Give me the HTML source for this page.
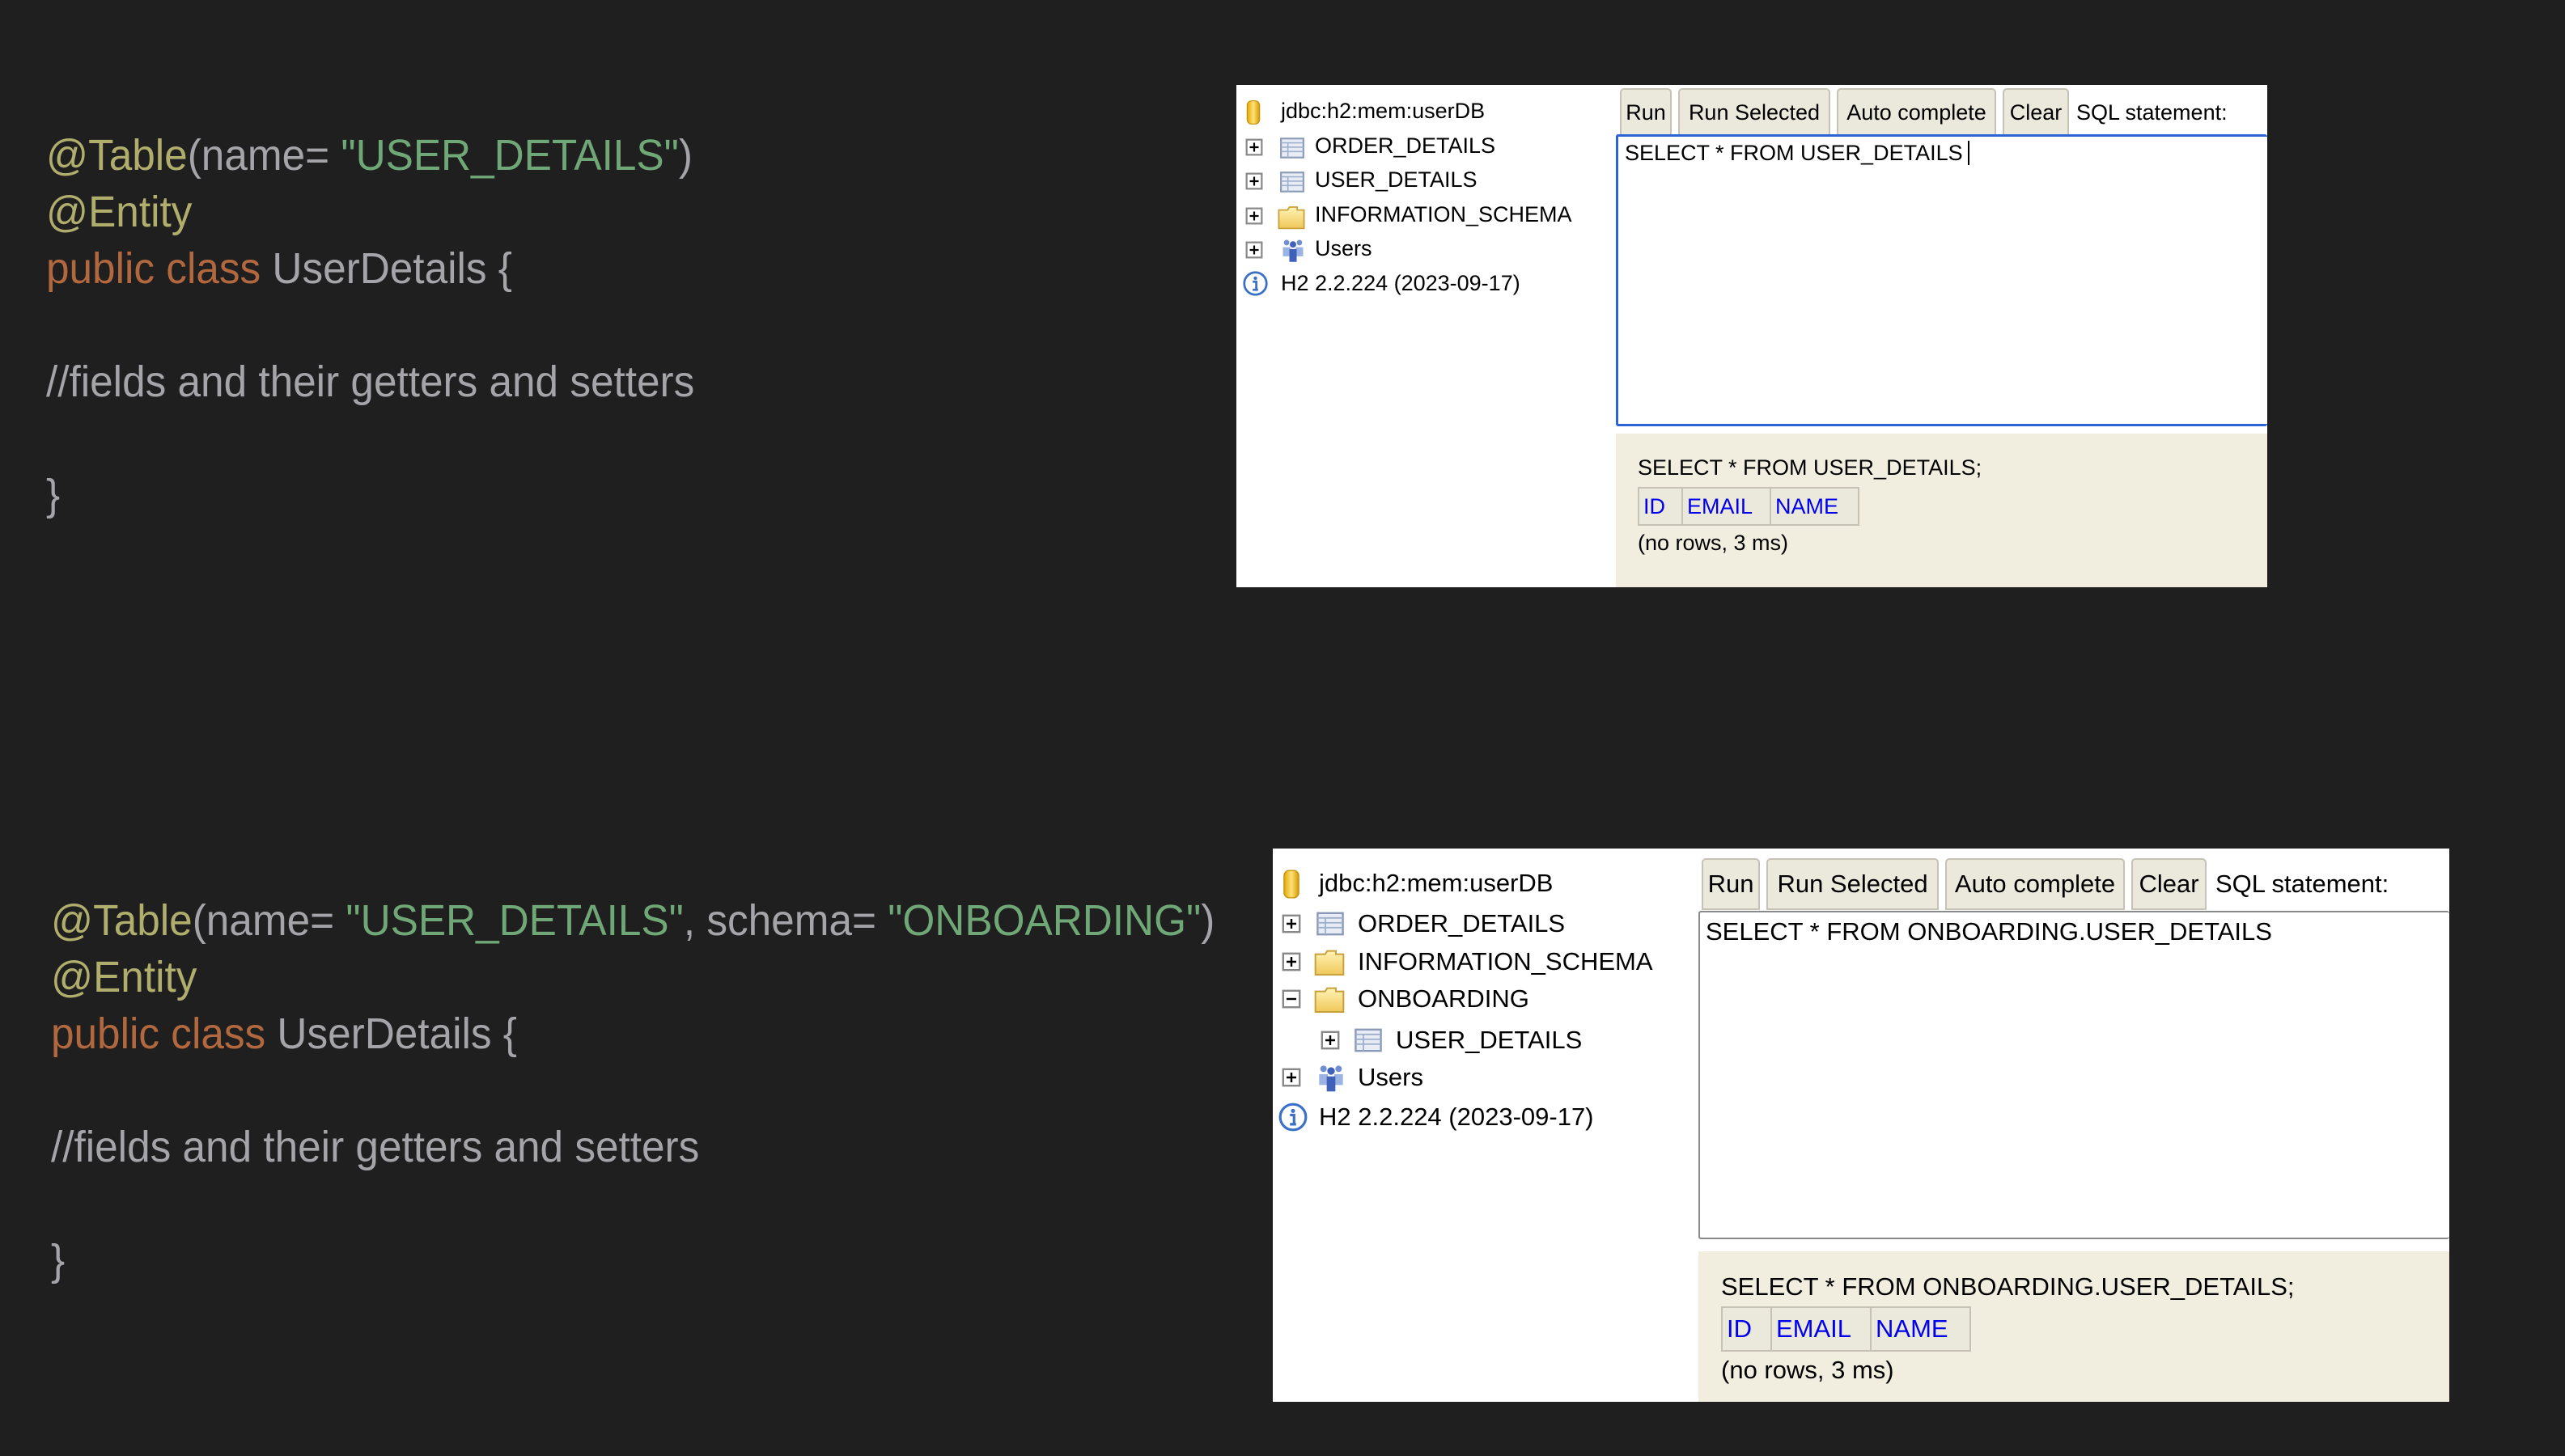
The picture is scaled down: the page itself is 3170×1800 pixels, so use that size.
<!DOCTYPE html>
<html><head><meta charset="utf-8"><style>
*{margin:0;padding:0;box-sizing:border-box}
body{width:3170px;height:1800px;background:#1f1f1f;position:relative;overflow:hidden;font-family:"Liberation Sans",Arial,sans-serif}
.code{position:absolute;left:0;font-family:"Liberation Sans",sans-serif;font-size:54px;line-height:70px;white-space:pre;color:#a4a4a9;transform:scaleX(0.95);transform-origin:0 0}
.an{color:#b0ae6c}.st{color:#6fa876}.kw{color:#b2683f}
.panel{position:absolute;background:#fff}
.ab{position:absolute;white-space:nowrap;color:#000}
.btn{position:absolute;background:#ebe8dc;border:2px solid #c6c3b6;border-radius:5px 5px 0 0;color:#000;white-space:nowrap;text-align:center}
.res{position:absolute;background:#f1eee0}
table{position:absolute;border-collapse:collapse;background:#ebe8dc;border:2px solid #c6c3b6}
td{border:2px solid #c6c3b6;color:#0000ee;padding:0 5px;white-space:nowrap}
</style></head><body>

<div class="code" style="left:57px;top:157px"><span class="an">@Table</span>(name= <span class="st">"USER_DETAILS"</span>)
<span class="an">@Entity</span>
<span class="kw">public class</span> UserDetails {

//fields and their getters and setters

}</div>

<div class="code" style="left:63px;top:1103px"><span class="an">@Table</span>(name= <span class="st">"USER_DETAILS"</span>, schema= <span class="st">"ONBOARDING"</span>)
<span class="an">@Entity</span>
<span class="kw">public class</span> UserDetails {

//fields and their getters and setters

}</div>

<svg width="0" height="0" style="position:absolute">
<defs>
<linearGradient id="gold" x1="0" x2="1"><stop offset="0" stop-color="#e2a800"/><stop offset=".5" stop-color="#ffe27a"/><stop offset="1" stop-color="#d49a00"/></linearGradient>
<linearGradient id="fold" x1="0" y1="0" x2="0" y2="1"><stop offset="0" stop-color="#fff3b5"/><stop offset="1" stop-color="#f0c85a"/></linearGradient>
<symbol id="db" viewBox="0 0 20 30"><rect x="3" y="2" width="14" height="26" rx="5" fill="url(#gold)" stroke="#c58d00"/></symbol>
<symbol id="plus" viewBox="0 0 20 20"><rect x="1.5" y="1.5" width="17" height="17" fill="#fff" stroke="#888" stroke-width="2"/><path d="M5 10h10M10 5v10" stroke="#000" stroke-width="2"/></symbol>
<symbol id="minus" viewBox="0 0 20 20"><rect x="1.5" y="1.5" width="17" height="17" fill="#fff" stroke="#888" stroke-width="2"/><path d="M5 10h10" stroke="#000" stroke-width="2"/></symbol>
<symbol id="tbl" viewBox="0 0 30 30"><rect x="2" y="4" width="26" height="22" fill="#e8edf5" stroke="#8a9ab8" stroke-width="2"/><path d="M2 9h26M2 14h26M2 19h26M10 9v17" stroke="#9fb0cc" stroke-width="1.5"/></symbol>
<symbol id="fld" viewBox="0 0 30 30"><path d="M2 8h9l2 -3h8v3h7v19H2z" fill="url(#fold)" stroke="#c9a13b" stroke-width="1.5"/></symbol>
<symbol id="usr" viewBox="0 0 30 30"><circle cx="8" cy="7" r="3" fill="#6f8fd0"/><circle cx="22" cy="7" r="3" fill="#6f8fd0"/><circle cx="15" cy="9" r="3.5" fill="#3f62b8"/><path d="M4 12h8v10H4zM18 12h8v10h-8z" fill="#9bb3e3"/><path d="M11 14h8v14h-8z" fill="#3f62b8"/></symbol>
<symbol id="inf" viewBox="0 0 30 30"><circle cx="15" cy="15" r="12.5" fill="#fff" stroke="#3a70c7" stroke-width="2.5"/><circle cx="15" cy="9" r="2" fill="#3a70c7"/><path d="M12 13h4v9h2M12 22h6" stroke="#3a70c7" stroke-width="2.5" fill="none"/></symbol>
</defs></svg>

<!-- TOP PANEL -->
<div class="panel" style="left:1528px;top:105px;width:1274px;height:621px;font-size:27px">
  <svg class="ab" style="left:10px;top:17px" width="22" height="34"><use href="#db"/></svg>
  <div class="ab" style="left:55px;top:16px;line-height:32px">jdbc:h2:mem:userDB</div>

  <svg class="ab" style="left:11px;top:66px" width="22" height="22"><use href="#plus"/></svg>
  <svg class="ab" style="left:53px;top:62px" width="32" height="32"><use href="#tbl"/></svg>
  <div class="ab" style="left:97px;top:59px;line-height:32px">ORDER_DETAILS</div>

  <svg class="ab" style="left:11px;top:108px" width="22" height="22"><use href="#plus"/></svg>
  <svg class="ab" style="left:53px;top:104px" width="32" height="32"><use href="#tbl"/></svg>
  <div class="ab" style="left:97px;top:101px;line-height:32px">USER_DETAILS</div>

  <svg class="ab" style="left:11px;top:151px" width="22" height="22"><use href="#plus"/></svg>
  <svg class="ab" style="left:50px;top:145px" width="36" height="36"><use href="#fld"/></svg>
  <div class="ab" style="left:97px;top:144px;line-height:32px">INFORMATION_SCHEMA</div>

  <svg class="ab" style="left:11px;top:193px" width="22" height="22"><use href="#plus"/></svg>
  <svg class="ab" style="left:53px;top:187px" width="34" height="34"><use href="#usr"/></svg>
  <div class="ab" style="left:97px;top:186px;line-height:32px">Users</div>

  <svg class="ab" style="left:7px;top:229px" width="33" height="33"><use href="#inf"/></svg>
  <div class="ab" style="left:55px;top:229px;line-height:32px">H2 2.2.224 (2023-09-17)</div>

  <div class="btn" style="left:474px;top:4px;width:64px;height:60px;line-height:56px">Run</div>
  <div class="btn" style="left:546px;top:4px;width:188px;height:60px;line-height:56px">Run Selected</div>
  <div class="btn" style="left:742px;top:4px;width:197px;height:60px;line-height:56px">Auto complete</div>
  <div class="btn" style="left:947px;top:4px;width:82px;height:60px;line-height:56px">Clear</div>
  <div class="ab" style="left:1038px;top:18px;line-height:32px">SQL statement:</div>

  <div class="ab" style="left:469px;top:61px;width:805px;height:361px;border:3px solid #2d63d6;border-right:none;border-radius:3px"></div>
  <div class="ab" style="left:480px;top:68px;line-height:32px">SELECT * FROM USER_DETAILS<span style="border-right:2px solid #000;margin-left:6px"></span></div>

  <div class="res" style="left:469px;top:431px;width:805px;height:190px"></div>
  <div class="ab" style="left:496px;top:457px;line-height:32px">SELECT * FROM USER_DETAILS;</div>
  <table style="left:496px;top:497px;height:48px;font-size:27px"><tr><td style="width:54px">ID</td><td style="width:109px">EMAIL</td><td style="width:109px">NAME</td></tr></table>
  <div class="ab" style="left:496px;top:550px;line-height:32px">(no rows, 3 ms)</div>
</div>

<!-- BOTTOM PANEL -->
<div class="panel" style="left:1573px;top:1049px;width:1454px;height:684px;font-size:31px">
  <svg class="ab" style="left:10px;top:24px" width="26" height="40"><use href="#db"/></svg>
  <div class="ab" style="left:57px;top:25px;line-height:36px">jdbc:h2:mem:userDB</div>

  <svg class="ab" style="left:11px;top:81px" width="24" height="24"><use href="#plus"/></svg>
  <svg class="ab" style="left:53px;top:75px" width="36" height="36"><use href="#tbl"/></svg>
  <div class="ab" style="left:105px;top:75px;line-height:36px">ORDER_DETAILS</div>

  <svg class="ab" style="left:11px;top:128px" width="24" height="24"><use href="#plus"/></svg>
  <svg class="ab" style="left:50px;top:120px" width="40" height="40"><use href="#fld"/></svg>
  <div class="ab" style="left:105px;top:122px;line-height:36px">INFORMATION_SCHEMA</div>

  <svg class="ab" style="left:11px;top:174px" width="24" height="24"><use href="#minus"/></svg>
  <svg class="ab" style="left:50px;top:166px" width="40" height="40"><use href="#fld"/></svg>
  <div class="ab" style="left:105px;top:168px;line-height:36px">ONBOARDING</div>

  <svg class="ab" style="left:59px;top:225px" width="24" height="24"><use href="#plus"/></svg>
  <svg class="ab" style="left:100px;top:219px" width="36" height="36"><use href="#tbl"/></svg>
  <div class="ab" style="left:152px;top:219px;line-height:36px">USER_DETAILS</div>

  <svg class="ab" style="left:11px;top:271px" width="24" height="24"><use href="#plus"/></svg>
  <svg class="ab" style="left:52px;top:263px" width="40" height="40"><use href="#usr"/></svg>
  <div class="ab" style="left:105px;top:265px;line-height:36px">Users</div>

  <svg class="ab" style="left:6px;top:313px" width="38" height="38"><use href="#inf"/></svg>
  <div class="ab" style="left:57px;top:314px;line-height:36px">H2 2.2.224 (2023-09-17)</div>

  <div class="btn" style="left:530px;top:12px;width:72px;height:64px;line-height:60px">Run</div>
  <div class="btn" style="left:610px;top:12px;width:213px;height:64px;line-height:60px">Run Selected</div>
  <div class="btn" style="left:831px;top:12px;width:222px;height:64px;line-height:60px">Auto complete</div>
  <div class="btn" style="left:1061px;top:12px;width:93px;height:64px;line-height:60px">Clear</div>
  <div class="ab" style="left:1165px;top:26px;line-height:36px">SQL statement:</div>

  <div class="ab" style="left:526px;top:77px;width:928px;height:406px;border:2px solid #8a8a8a;border-right:none;border-radius:3px"></div>
  <div class="ab" style="left:535px;top:85px;line-height:36px">SELECT * FROM ONBOARDING.USER_DETAILS</div>

  <div class="res" style="left:526px;top:498px;width:928px;height:186px"></div>
  <div class="ab" style="left:554px;top:524px;line-height:36px">SELECT * FROM ONBOARDING.USER_DETAILS;</div>
  <table style="left:554px;top:566px;height:56px;font-size:31px"><tr><td style="width:61px">ID</td><td style="width:123px">EMAIL</td><td style="width:123px">NAME</td></tr></table>
  <div class="ab" style="left:554px;top:627px;line-height:36px">(no rows, 3 ms)</div>
</div>

</body></html>
